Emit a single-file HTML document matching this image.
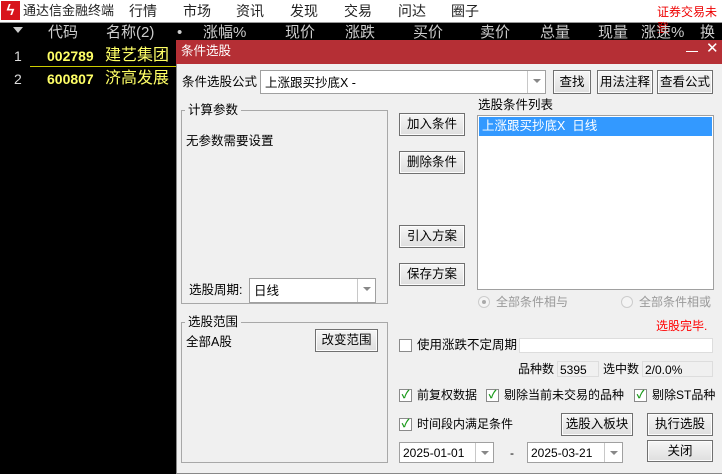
<!DOCTYPE html>
<html><head><meta charset="utf-8"><style>
*{margin:0;padding:0;box-sizing:border-box}
body{width:722px;height:474px;overflow:hidden;background:#000;font-family:"Liberation Sans","Noto Sans CJK SC",sans-serif;font-size:12px;line-height:16px;position:relative}
.a{position:absolute;white-space:nowrap}
.btn{position:absolute;border:1px solid #707070;background:linear-gradient(#f6f6f6,#dedede);text-align:center;font-size:12.5px;color:#000;box-shadow:inset 0 0 0 1px #fcfcfc}
.box{position:absolute;background:#fff;border:1px solid #a0a0a0}
.dd{position:absolute;top:0;right:0;bottom:0;width:18px;border-left:1px solid #c8c8c8}
.dd:after{content:"";position:absolute;left:5px;top:8px;border:4px solid transparent;border-top:4px solid #888}
.grp{position:absolute;border:1px solid #a8a8a8}
.leg{position:absolute;background:#f0f0f0;padding:0 3px;font-size:12.5px}
.cb{position:absolute;width:13px;height:13px;border:1px solid #8a8a8a;background:#fff;font-size:11px;line-height:11px;color:#1a9a1a;text-align:center;font-weight:bold}
.m{position:absolute;top:3px;font-size:14px;color:#222}
.h{position:absolute;top:25px;color:#ccc;font-size:15px}
.l{font-size:12.5px}
</style></head><body>
<div class="a" style="left:0;top:0;width:722px;height:23px;background:#fff;border-bottom:1px solid #999"></div>
<div class="a" style="left:1px;top:1px;width:19px;height:19px;background:#d8141c;color:#fff;font-weight:bold;font-size:15px;text-align:center;line-height:19px">ϟ</div>
<div class="m" style="left:23px;font-size:13px;top:3px">通达信金融终端</div>
<div class="m" style="left:129px">行情</div><div class="m" style="left:183px">市场</div><div class="m" style="left:236px">资讯</div><div class="m" style="left:290px">发现</div><div class="m" style="left:344px">交易</div><div class="m" style="left:398px">问达</div><div class="m" style="left:451px">圈子</div>
<div class="m" style="left:657px;color:#e00;font-size:12px;top:4px">证券交易未登</div>
<div class="a" style="left:13px;top:27px;width:0;height:0;border:5px solid transparent;border-top:6px solid #ccc"></div>
<div class="h" style="left:48px">代码</div><div class="h" style="left:106px">名称(2)</div><div class="h" style="left:177px">•</div>
<div class="h" style="left:203px">涨幅%</div><div class="h" style="left:285px">现价</div><div class="h" style="left:345px">涨跌</div><div class="h" style="left:413px">买价</div><div class="h" style="left:480px">卖价</div><div class="h" style="left:540px">总量</div><div class="h" style="left:598px">现量</div><div class="h" style="left:641px">涨速%</div><div class="h" style="left:700px">换手</div>
<div class="a" style="left:14px;top:48px;color:#ddd;font-size:14px">1</div>
<div class="a" style="left:47px;top:48px;color:#ff6;font-size:14px;font-weight:bold">002789</div>
<div class="a" style="left:105px;top:46px;color:#ff6;font-size:16px;line-height:20px">建艺集团</div>
<div class="a" style="left:30px;top:66px;width:146px;height:1px;background:#cc0"></div>
<div class="a" style="left:14px;top:71px;color:#ddd;font-size:14px">2</div>
<div class="a" style="left:47px;top:71px;color:#ff6;font-size:14px;font-weight:bold">600807</div>
<div class="a" style="left:105px;top:69px;color:#ff6;font-size:16px;line-height:20px">济高发展</div>

<div class="a" style="left:176px;top:40px;width:546px;height:434px;background:#f0f0f0;border-left:1px solid #888;border-bottom:1px solid #888"></div>
<div class="a" style="left:176px;top:40px;width:546px;height:24px;background:#b52f35"></div>
<div class="a l" style="left:181px;top:43px;color:#fff">条件选股</div>
<div class="a" style="left:686px;top:42px;width:12px;height:1px;background:#fff;top:51px"></div>
<div class="a" style="left:706px;top:41px;color:#fff;font-size:15px">✕</div>

<div class="a l" style="left:182px;top:74px">条件选股公式</div>
<div class="box" style="left:260px;top:70px;width:286px;height:24px"><span class="a l" style="left:4px;top:4px">上涨跟买抄底X -</span><div class="dd"></div></div>
<div class="btn" style="left:553px;top:70px;width:38px;height:24px;line-height:22px">查找</div>
<div class="btn" style="left:597px;top:70px;width:56px;height:24px;line-height:22px">用法注释</div>
<div class="btn" style="left:657px;top:70px;width:56px;height:24px;line-height:22px">查看公式</div>

<div class="grp" style="left:181px;top:110px;width:207px;height:194px"></div>
<div class="leg" style="left:185px;top:102px">计算参数</div>
<div class="a l" style="left:186px;top:133px">无参数需要设置</div>
<div class="a l" style="left:189px;top:282px">选股周期:</div>
<div class="box" style="left:249px;top:278px;width:127px;height:25px"><span class="a l" style="left:4px;top:4px">日线</span><div class="dd"></div></div>

<div class="grp" style="left:181px;top:322px;width:207px;height:141px"></div>
<div class="leg" style="left:185px;top:314px">选股范围</div>
<div class="a l" style="left:186px;top:334px">全部A股</div>
<div class="btn" style="left:315px;top:329px;width:63px;height:23px;line-height:21px">改变范围</div>

<div class="btn" style="left:399px;top:113px;width:66px;height:23px;line-height:21px">加入条件</div>
<div class="btn" style="left:399px;top:151px;width:66px;height:23px;line-height:21px">删除条件</div>
<div class="btn" style="left:399px;top:225px;width:66px;height:23px;line-height:21px">引入方案</div>
<div class="btn" style="left:399px;top:263px;width:66px;height:23px;line-height:21px">保存方案</div>

<div class="a l" style="left:478px;top:97px">选股条件列表</div>
<div class="box" style="left:477px;top:115px;width:237px;height:175px"><div class="a l" style="left:1px;top:1px;width:233px;height:19px;background:#3399ff;color:#fff;padding:1px 0 0 3px">上涨跟买抄底X&nbsp; 日线</div></div>
<div class="a" style="left:478px;top:296px;width:12px;height:12px;border-radius:50%;border:1px solid #ccc;background:#f4f4f4"><div style="position:absolute;left:3px;top:3px;width:4px;height:4px;border-radius:50%;background:#aaa"></div></div>
<div class="a" style="left:496px;top:294px;color:#999">全部条件相与</div>
<div class="a" style="left:621px;top:296px;width:12px;height:12px;border-radius:50%;border:1px solid #ccc;background:#f4f4f4"></div>
<div class="a" style="left:639px;top:294px;color:#999">全部条件相或</div>
<div class="a" style="left:656px;top:318px;color:#f00">选股完毕.</div>

<div class="cb" style="left:399px;top:339px"></div><div class="a l" style="left:417px;top:337px">使用涨跌不定周期</div>
<div class="box" style="left:519px;top:338px;width:194px;height:15px;border-color:#ddd"></div>
<div class="a" style="left:518px;top:361px">品种数</div>
<div class="a" style="left:557px;top:361px;width:42px;height:16px;border:1px solid #ddd;padding-left:2px">5395</div>
<div class="a" style="left:603px;top:361px">选中数</div>
<div class="a" style="left:642px;top:361px;width:71px;height:16px;border:1px solid #ddd;padding-left:2px">2/0.0%</div>

<div class="cb" style="left:399px;top:389px">✓</div><div class="a" style="left:417px;top:387px">前复权数据</div>
<div class="cb" style="left:486px;top:389px">✓</div><div class="a" style="left:504px;top:387px">剔除当前未交易的品种</div>
<div class="cb" style="left:634px;top:389px">✓</div><div class="a" style="left:652px;top:387px">剔除ST品种</div>
<div class="cb" style="left:399px;top:418px">✓</div><div class="a" style="left:417px;top:416px">时间段内满足条件</div>
<div class="btn" style="left:561px;top:413px;width:72px;height:23px;line-height:21px">选股入板块</div>
<div class="btn" style="left:647px;top:413px;width:66px;height:23px;line-height:21px">执行选股</div>
<div class="box" style="left:399px;top:442px;width:95px;height:21px"><span class="a" style="left:3px;top:2px">2025-01-01</span><div class="dd"></div></div>
<div class="a" style="left:510px;top:445px">-</div>
<div class="box" style="left:527px;top:442px;width:96px;height:21px"><span class="a" style="left:3px;top:2px">2025-03-21</span><div class="dd"></div></div>
<div class="btn" style="left:647px;top:440px;width:66px;height:22px;line-height:20px">关闭</div>
</body></html>
